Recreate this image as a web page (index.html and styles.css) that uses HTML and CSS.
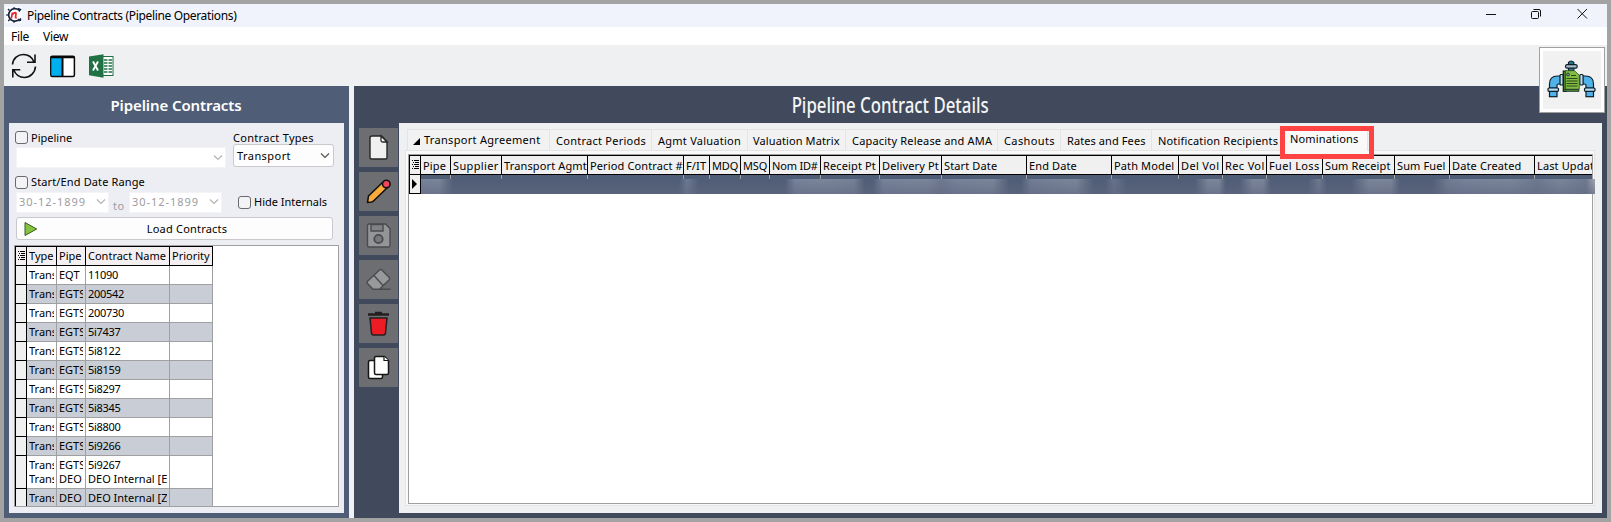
FILE: index.html
```
<!DOCTYPE html>
<html lang="en">
<head>
<meta charset="utf-8">
<title>Pipeline Contracts (Pipeline Operations)</title>
<link rel="stylesheet" href="styles.css">
</head>
<body>
<div class="window">
  <header class="titlebar">
    <svg class="app-icon" width="16" height="16" viewBox="0 0 16 16"><rect width="16" height="16" fill="#fff"/><path d="M12.900 3.200A6.200 6.200 0 1 0 13.500 12" fill="none" stroke="#14233f" stroke-width="1.700"/><path d="M2 2l1.500 1.500M.3 8h1.500M2.200 14l1.500-1.500M8 .3v1.500M8 14.200v1.500M12 1.500l2.500 1-1.500 2M12.500 13.800l2-.5v-2" stroke="#14233f" stroke-width="1.400" fill="#14233f"/><path d="M5.300 11.500l1.200-6M6.200 7.500Q10.400 4 10 7L9.500 10.200Q9.500 11.200 10.800 10.600" fill="none" stroke="#e8262e" stroke-width="1.700"/></svg>
    <span class="caption">Pipeline Contracts (Pipeline Operations)</span>
    <svg class="win-buttons" width="102" height="12" viewBox="0 0 102 12" fill="none" stroke="#111"><path d="M0 6.500h10" /><rect x="45.500" y="3.500" width="7" height="7" rx="1"/><path d="M47.500 1.500h5.500q1.500 0 1.500 1.500v5.500"/><path d="M91.500 1l9.500 9.500M101 1l-9.500 9.500"/></svg>
  </header>
  <nav class="menubar"><span class="file">File</span><span>View</span></nav>
  <div class="toolbar">
    <svg width="26" height="26" viewBox="0 0 26 26" fill="none" stroke="#111" stroke-width="1.600"><path d="M1.500 11.500C2 5 7 1.500 12.500 1.500c5 0 8.500 3 10.300 7M24 1.500v7.800h-8M24.500 13.500C24 20 19 24.500 13.500 24.500c-5 0-9-3-11-8M1.800 24.500v-7.800h7.500"/></svg>
    <svg width="26" height="26" viewBox="0 0 26 26"><rect x=".8" y="3.200" width="23.600" height="20.300" rx="2" fill="#fff"/><path d="M1.500 5h10.500v18H1.500z" fill="#00aff0"/><rect x=".8" y="3.200" width="23.600" height="20.300" rx="1.500" fill="none" stroke="#080808" stroke-width="1.500"/><path d="M.6 4.200h24M12.500 4v19" stroke="#080808" stroke-width="2"/></svg>
    <svg width="26" height="26" viewBox="0 0 26 26"><rect x="13" y="3.500" width="11" height="19" fill="#fff" stroke="#207245"/><path d="M15 7h3.500M19.500 7h3.500M15 10h3.500M19.500 10h3.500M15 13h3.500M19.500 13h3.500M15 16h3.500M19.500 16h3.500M15 19h3.500M19.500 19h3.500" stroke="#207245" stroke-width="1.700"/><path d="M0 3.500L14.500 1.200v23.600L0 22.200z" fill="#207245"/><path d="M4 8.500l5 9M9 8.500l-5 9" stroke="#fff" stroke-width="1.900"/></svg>
  </div>
  <div class="module-icon"><svg width="58" height="58" viewBox="0 0 58 58" stroke="#0b1d26" stroke-width="1.200">
    <path d="M6.500 37V33q0-8 8-8H18v8h-2.500q-1.500 0-1.500 1.500V37z" fill="#4fb3ea"/><path d="M50.500 37V33q0-8-8-8H39v8h2.500q1.500 0 1.500 1.500V37z" fill="#4fb3ea"/>
    <rect x="6.500" y="40" width="7.500" height="5.700" fill="#4fb3ea"/><rect x="43" y="40" width="7.500" height="5.700" fill="#4fb3ea"/>
    <rect x="5" y="37" width="10.500" height="3.300" rx="1" fill="#b7dcf3"/><rect x="41.500" y="37" width="10.500" height="3.300" rx="1" fill="#b7dcf3"/>
    <rect x="17" y="23.500" width="3.300" height="10.500" rx="1" fill="#b7dcf3"/><rect x="36.800" y="23.500" width="3.300" height="10.500" rx="1" fill="#b7dcf3"/>
    <path d="M25.500 11.500q2.700-3 5.300 0V20h-5.300z" fill="#287990"/><rect x="22.500" y="13.700" width="11.700" height="3.500" rx="1.700" fill="#a8bfce"/>
    <path d="M20.300 20h3v20.500h-3z" fill="#487d2e"/><path d="M22.500 19.700h9l4.800 4.500v14H22.500z" fill="#82bd43" stroke="#2f5220" stroke-width=".8"/><path d="M20.500 38.500H36v2H20.500z" fill="#487d2e" stroke-width=".6"/><path d="M28 24.500h5M23.500 27.500h11M23.500 30h11M23.500 32.500h11M23.500 35h11" stroke="#29471a" stroke-width="1"/><circle cx="25" cy="23.500" r="1.500" fill="#7a8f8a" stroke-width=".7"/>
  </svg></div>
  <main class="workspace">
    <section class="contracts">
      <h1 class="contracts-title">Pipeline Contracts</h1>
      <div class="contracts-body">
        <div class="filters">
          <div class="filter-main">
            <label class="check first"><i class="box"></i>Pipeline</label>
            <div class="field wide"><svg class="chev" width="10" height="6"><path d="M1 .5l4 4 4-4"/></svg></div>
          </div>
          <div class="filter-types">
            <span class="types-label">Contract Types</span>
            <div class="select">Transport<svg class="chev" width="10" height="6"><path d="M1 .5l4 4 4-4"/></svg></div>
          </div>
        </div>
        <label class="check range">
          <i class="box"></i>Start/End Date Range</label>
        <div class="dates">
          <div class="field date">30-12-1899<svg class="chev" width="10" height="6"><path d="M1 .5l4 4 4-4"/></svg></div>
          <span class="to">to</span>
          <div class="field date">30-12-1899<svg class="chev" width="10" height="6"><path d="M1 .5l4 4 4-4"/></svg></div>
          <label class="check hide"><i class="box"></i>Hide Internals</label>
        </div>
        <div class="load"><svg width="14" height="16" viewBox="0 0 14 16"><path d="M1 1.500v13L12.700 8z" fill="#85c441" stroke="#3b5a22"/></svg><span>Load Contracts</span></div>
        <div class="list">
          <div class="row head"><i class="ind"><svg width="9" height="12" viewBox="0 0 9 12"><path d="M1 1.500h1M3 1.500h5M2 3.500h1M4 3.500h4M1 5.500h1M3 5.500h5M2 7.500h1M4 7.500h4M1 9.500h1M3 9.500h5" stroke="#000"/></svg></i><span>Type</span><span>Pipe</span><span>Contract Name</span><span>Priority</span></div>
          <div class="row"><i class="ind"></i><span>Trans</span><span>EQT</span><span class="num">11090</span><span></span></div>
          <div class="row"><i class="ind"></i><span>Trans</span><span>EGTS</span><span class="num">200542</span><span></span></div>
          <div class="row"><i class="ind"></i><span>Trans</span><span>EGTS</span><span class="num">200730</span><span></span></div>
          <div class="row"><i class="ind"></i><span>Trans</span><span>EGTS</span><span class="num">5i7437</span><span></span></div>
          <div class="row"><i class="ind"></i><span>Trans</span><span>EGTS</span><span class="num">5i8122</span><span></span></div>
          <div class="row"><i class="ind"></i><span>Trans</span><span>EGTS</span><span class="num">5i8159</span><span></span></div>
          <div class="row"><i class="ind"></i><span>Trans</span><span>EGTS</span><span class="num">5i8297</span><span></span></div>
          <div class="row"><i class="ind"></i><span>Trans</span><span>EGTS</span><span class="num">5i8345</span><span></span></div>
          <div class="row"><i class="ind"></i><span>Trans</span><span>EGTS</span><span class="num">5i8800</span><span></span></div>
          <div class="row"><i class="ind"></i><span>Trans</span><span>EGTS</span><span class="num">5i9266</span><span></span></div>
          <div class="row double"><i class="ind"></i><span>Trans<br>Trans</span><span>EGTS<br>DEO</span><span><b class="num">5i9267</b><br>DEO Internal [E</span><span></span></div>
          <div class="row"><i class="ind"></i><span>Trans</span><span>DEO</span><span>DEO Internal [Z</span><span></span></div>
        </div>
      </div>
    </section>
    <section class="details">
      <h2 class="details-title"><span>Pipeline Contract Details</span></h2>
      <div class="details-main">
        <aside class="actions">
          <div class="action"><svg width="39" height="39" viewBox="0 0 39 39"><path d="M13 8h9.500l5.500 5.500V29.500q0 1.500-1.500 1.500H12.500Q11 31 11 29.500V10q0-2 2-2z" fill="#f0f0f0" stroke="#262626" stroke-width="1.400"/><path d="M22 8v4.500q0 1.500 1.500 1.500H28z" fill="#fff" stroke="#262626" stroke-width="1.300"/></svg></div>
          <div class="action"><svg width="39" height="39" viewBox="0 0 39 39" stroke="#111" stroke-width="1.600" stroke-linejoin="round"><path d="M8.500 30.500L9.500 24 23.500 10.500l5 5L14.500 29q-1.500 1.500-6 1.500z" fill="#fbab3b"/><circle cx="27.300" cy="12" r="3.800" fill="#f0475c"/></svg></div>
          <div class="action"><svg width="39" height="39" viewBox="0 0 39 39" fill="#939598" stroke="#4a4b4d" stroke-width="1.400"><path d="M10 8h16.500l4.500 4.500V29.500q0 1.500-1.500 1.500H10q-1.500 0-1.500-1.500v-20Q8.500 8 10 8z"/><path d="M12 8.500h12v6.500H12z" fill="#808285"/><circle cx="19.500" cy="23" r="4.200" fill="#77797b" stroke-width="1.800"/></svg></div>
          <div class="action"><svg width="39" height="39" viewBox="0 0 39 39" fill="#97999b" stroke="#4a4b4d" stroke-width="1.400" stroke-linejoin="round"><path d="M8.500 23.500q-1-1.200 0-2.200L20.500 10q1.200-1 2.400 0l7.300 7.500q1 1 0 2.200L20.500 29.300H14zM15 15.500l9 10M14 29.300h17.500"/></svg></div>
          <div class="action"><svg width="39" height="39" viewBox="0 0 39 39"><path d="M11 14h17l-1.500 15q-.2 2-2 2h-10q-1.800 0-2-2z" fill="#ed1c24" stroke="#231f20" stroke-width="1.500"/><path d="M9 10.500h21M16 9h7" stroke="#231f20" stroke-width="2.600"/></svg></div>
          <div class="action"><svg width="39" height="39" viewBox="0 0 39 39" fill="#fff" stroke="#151515" stroke-width="1.500"><rect x="9.500" y="12.500" width="14" height="18" rx="1.500"/><path d="M17 8.500h8.500l4 4V25q0 1.500-1.500 1.500H17q-1.500 0-1.500-1.500V10q0-1.500 1.500-1.500z"/><path d="M25 8.500v4h4.500" stroke-width="1.200"/></svg></div>
        </aside>
        <div class="tabs-area">
          <div class="tabs">
            <span class="tab t1"><svg width="7" height="7"><path d="M7 0v7H0z"/></svg>Transport Agreement</span><span class="tab t2">Contract Periods</span><span class="tab t3">Agmt Valuation</span><span class="tab t4">Valuation Matrix</span><span class="tab t5">Capacity Release and AMA</span><span class="tab t6">Cashouts</span><span class="tab t7">Rates and Fees</span><span class="tab t8">Notification Recipients</span><span class="tab t9">Nominations</span>
          </div>
          <div class="page">
            <div class="grid">
              <div class="cols">
                <i class="ind"><svg width="9" height="12" viewBox="0 0 9 12"><path d="M1 1.500h1M3 1.500h5M2 3.500h1M4 3.500h4M1 5.500h1M3 5.500h5M2 7.500h1M4 7.500h4M1 9.500h1M3 9.500h5" stroke="#000"/></svg></i><span>Pipe</span><span class="loose">Supplier</span><span>Transport Agmt</span><span>Period Contract #</span><span>F/IT</span><span class="tight">MDQ</span><span class="tight">MSQ</span><span class="tight">Nom ID#</span><span>Receipt Pt</span><span>Delivery Pt</span><span>Start Date</span><span>End Date</span><span>Path Model</span><span class="loose">Del Vol</span><span class="loose">Rec Vol</span><span class="loose">Fuel Loss</span><span>Sum Receipt</span><span>Sum Fuel</span><span>Date Created</span><span>Last Updat</span>
              </div>
              <div class="cols selected"><i class="ind"><svg width="6" height="10"><path d="M0 0l5 5-5 5z"/></svg></i><span></span><span></span><span></span><span></span><span></span><span></span><span></span><span></span><span></span><span></span><span></span><span></span><span></span><span></span><span></span><span></span><span></span><span></span><span></span><span></span></div>
              <div class="obscured"></div>
            </div>
          </div>
          <div class="highlight"></div>
        </div>
      </div>
    </section>
  </main>
</div>
</body>
</html>
```
FILE: styles.css
```
* { box-sizing: border-box; }
body {
  margin: 0; width: 1611px; height: 522px; padding: 4px; overflow: hidden;
  background: #a3a3a3; color: #000;
  font: 11px/14px "Noto Sans", "Open Sans", sans-serif;
}
h1, h2 { margin: 0; }
svg { display: block; flex: none; }
.window { position: relative; width: 1603px; height: 514px; display: flex; flex-direction: column; background: #eff0f3; }

.titlebar { height: 23px; display: flex; align-items: center; padding: 0 12px 0 2px; background: #f0f3fb; font-size: 12px; letter-spacing: -.34px; }
.app-icon { margin-bottom: 1px; }
.caption { margin-left: 5px; }
.win-buttons { margin-left: auto; margin-right: 7px; margin-bottom: 3px; }
.menubar { height: 18px; display: flex; gap: 14px; padding: 1px 7px; background: #fff; font-size: 12px; line-height: 17px; letter-spacing: -.3px; }
.toolbar { height: 41px; display: flex; gap: 13px; padding: 8px 7px 0 7px; background: #eff0f2; }
.module-icon { position: absolute; right: 2px; top: 43px; width: 66px; height: 66px; border: 1px solid #a0a0a0; background: #f1f1f1; box-shadow: inset 0 0 0 3px #fff; padding: 3px; }

.workspace { flex: 1; min-height: 0; display: flex; gap: 5px; background: #eff1f4; }

.contracts { width: 345px; display: flex; flex-direction: column; padding: 0 5px 5px; background: #505d76; }
.contracts-title { height: 37px; padding-right: 1px; color: #fff; text-align: center; font-size: 15px; font-weight: 600; line-height: 38px; letter-spacing: -.1px; }
.contracts-body { flex: 1; min-height: 0; display: flex; flex-direction: column; padding: 7px 5px 6px; background: #edeef3; letter-spacing: .2px; }
.filters { display: flex; height: 45px; }
.filter-main { width: 212px; margin-right: 7px; padding: 1px 0 0 1px; }
.check { display: flex; align-items: center; height: 13px; gap: 3px; white-space: nowrap; }
.first { letter-spacing: 0; }
.box { width: 13px; height: 13px; border: 1px solid #6a6a6c; border-radius: 3px; background: #f3f3f5; }
.field { height: 21px; display: flex; align-items: center; justify-content: space-between; padding: 0 2px; border: 1px solid #f4f4f6; background: #fff; color: #9d9da1; }
.chev { fill: none; stroke: #b3b3b3; stroke-width: 1.2; }
.wide { width: 210px; margin: 3px 0 0 1px; justify-content: flex-end; }
.types-label { display: block; height: 14px; line-height: 15px; letter-spacing: .3px; }
.select { width: 101px; height: 23px; display: flex; align-items: center; justify-content: space-between; padding: 0 3px; border: 1px solid #c9c9cb; border-radius: 3px; background: #fdfdfd; letter-spacing: .44px; }
.select .chev { stroke: #555; }
.range { padding: 1px 0 0 1px; height: 14px; letter-spacing: .13px; }
.dates { display: flex; margin-top: 3px; padding-left: 2px; height: 25px; }
.date { width: 93px; letter-spacing: .95px; }
.to { width: 20px; padding: 7px 0 0 4px; color: #9d9da1; letter-spacing: .6px; }
.hide { margin: 4px 0 0 16px; letter-spacing: 0; }
.load { position: relative; height: 23px; width: 317px; margin-left: 2px; display: flex; align-items: center; justify-content: center; border: 1px solid #c9c9cb; border-radius: 3px; background: #fdfdfd; }
.load svg { position: absolute; left: 7px; top: 3px; }
.load span { padding-left: 25px; padding-top: 1px; }

.list { width: 325px; height: 263px; margin-top: 5px; border: 1px solid #a0a0a0; background: #fff; overflow: hidden; letter-spacing: 0; }
.row { display: grid; grid-template-columns: 12px 30px 29px 84px 43px; width: 198px; height: 19px; line-height: 17px; }
.row span { overflow: clip; overflow-clip-margin: content-box; padding: 0 2px; white-space: nowrap; border-right: 1px solid #a0a0a0; border-bottom: 1px solid #a0a0a0; }
.row:nth-child(odd) span { background: #c9cdd5; }
.row.head { height: 20px; border-top: 1px solid #000; }
.row.head span, .row.head .ind { background: #f4f0f2; border-color: #000; line-height: 18px; }
.row.head span { overflow: visible; }
.row.double { height: 33px; }
.row.double span { background: #fff; line-height: 14px; padding-top: 2px; }
.row.double + .row span { background: #c9cdd5; }
.ind { border: solid #000; border-width: 0 1px 1px 1px; background: #f0f0f0; display: flex; align-items: center; justify-content: center; }
.num { font-weight: 400; letter-spacing: -.29px; }

.details { flex: 1; min-width: 0; display: flex; flex-direction: column; padding: 0 5px 5px; background: #404a5c; }
.details-title { height: 37px; text-align: center; color: #f5f5f5; font-size: 21px; font-weight: 500; line-height: 38px; padding-right: 180px; }
.details-title span { display: inline-block; transform: scaleX(.8); }
.details-main { flex: 1; min-height: 0; display: flex; }
.actions { width: 40px; padding-top: 5px; display: flex; flex-direction: column; gap: 5px; }
.action { width: 39px; height: 39px; background: #6d6e71; }

.tabs-area { position: relative; flex: 1; min-width: 0; padding: 4px 7px 6px 6px; background: #eff0f2; }
.tabs { height: 23px; display: flex; padding: 2px 0 0 2px; letter-spacing: .18px; }
.tab { height: 21px; padding-left: 6px; white-space: nowrap; line-height: 22px; background: #f2f2f2; border: solid #e4e4e4; border-width: 1px 1px 0 0; }
.t1 { width: 143px; display: flex; align-items: center; gap: 4px; padding-left: 5px; border-left-width: 1px; letter-spacing: .3px; }
.t1 svg { margin-top: 2px; }
.t2 { width: 102px; letter-spacing: .26px; }
.t3 { width: 96px; letter-spacing: .25px; }
.t4 { width: 98px; padding-left: 5px; letter-spacing: .11px; }
.t5 { width: 152px; }
.t6 { width: 63px; letter-spacing: .39px; }
.t7 { width: 91px; letter-spacing: .09px; }
.t8 { width: 130px; }
.t9 { width: 86px; height: 24px; margin-top: -2px; padding-left: 8px; background: #f9f9f9; letter-spacing: .16px; }
.page { height: 356px; padding: 3px 1px 3px 2px; border: 1px solid #e5e5e5; background: #f9f9f9; }
.grid { position: relative; width: 1185px; height: 350px; border: 1px solid #a0a0a0; background: #fff; letter-spacing: .13px; }
.cols { display: grid; grid-template-columns: 12px 30px 51px 86px 96px 26px 31px 29px 51px 59px 62px 85px 85px 67px 44px 44px 56px 72px 55px 85px 57px; height: 20px; overflow: hidden; border-top: 1px solid #000; background: #f0f0f0; }
.cols span { padding-left: 2px; overflow: hidden; white-space: nowrap; line-height: 19px; border-right: 1px solid #000; border-bottom: 1px solid #000; }
.cols span:last-child { border-right: 0; }
.cols .loose { letter-spacing: .36px; }
.cols .tight { letter-spacing: -.18px; }
.selected { height: 19px; border-top: 0; background: #505d76; }
.selected span { border-bottom: 0; border-color: #a0a0a0; }
.obscured {
  position: absolute; left: 12px; top: 24px; width: 1174px; height: 15px;
  background:
    linear-gradient(rgba(80,93,118,0), rgba(96,103,128,.6)),
    linear-gradient(90deg, #76839a 0, #7b869a 18px, #505d76 32px, #505d76 258px, #6d7a91 266px, #505d76 278px, #505d76 364px, #76839a 374px, #7b869a 404px, #758197 433px, #505d76 444px, #505d76 452px, #76839a 462px, #7b869a 505px, #6d788f 520px, #76839a 535px, #7b869a 572px, #505d76 588px, #505d76 600px, #717d94 610px, #7b869a 655px, #505d76 673px, #505d76 684px, #66728a 693px, #505d76 706px, #505d76 774px, #7b869a 787px, #7b869a 798px, #505d76 805px, #505d76 818px, #7b869a 832px, #7b869a 842px, #505d76 850px, #505d76 887px, #6d798f 898px, #505d76 906px, #505d76 930px, #7b869a 948px, #7b869a 970px, #505d76 979px, #505d76 1011px, #707b91 1027px, #76839a 1045px, #7b869a 1090px, #6d798f 1115px, #7b869a 1140px, #6d798f 1165px, #a3a8b3 1174px);
}
.highlight { position: absolute; left: 881px; top: 3px; width: 94px; height: 33px; border: 5px solid #ff4242; }
```
